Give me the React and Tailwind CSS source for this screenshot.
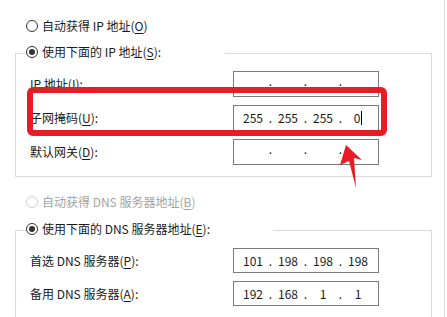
import React from 'react';

const Radio = ({ checked, disabled }) => (
    <span
        className={`flex h-[12px] w-[12px] shrink-0 items-center justify-center rounded-full border bg-white ${
            disabled ? 'border-[#cfcfcf]' : 'border-[#333333]'
        }`}
    >
        {checked && <span className="h-[6px] w-[6px] rounded-full bg-[#333333]" />}
    </span>
);

const Key = ({ k }) => (
    <>
        (<span className="underline underline-offset-2">{k}</span>)
    </>
);

const IpBox = ({ parts, cursor }) => {
    const empty = parts.every(p => p === '');
    return (
        <div className="flex h-full w-[146px] items-center border border-[#7a7a7a] bg-white pl-[4px] text-[12px] text-[#1a1a1a]">
            {parts.map((p, i) => (
                <React.Fragment key={i}>
                    {i > 0 && (
                        <span className={`relative w-[5px] text-center ${empty ? '-top-[3px]' : ''}`}>.</span>
                    )}
                    <span className="flex w-[30px] items-center justify-center">
                        {p}
                        {cursor && i === 3 && <span className="ml-[1px] h-[14px] w-px bg-black" />}
                    </span>
                </React.Fragment>
            ))}
        </div>
    );
};

const FieldRow = ({ label, k, parts, cursor, h }) => (
    <div className={`flex items-center ${h}`}>
        <span className="w-[203px] shrink-0">
            {label}
            <Key k={k} />:
        </span>
        <IpBox parts={parts} cursor={cursor} />
    </div>
);

export default function App() {
    return (
        <div
            className="relative h-[317px] w-[447px] overflow-hidden bg-white text-[12px] leading-none text-[#1a1a1a]"
            style={{ fontFamily: '"Noto Sans CJK SC", "Noto Sans", sans-serif' }}
        >
            <div className="h-full w-[445px] border-r border-[#d9d9d9] pt-[16px]">
                {/* IP 地址 */}
                <div className="ml-[26px] flex h-[20px] items-center gap-[4px]">
                    <Radio />
                    <span>
                        自动获得 IP 地址<Key k="O" />
                    </span>
                </div>

                <fieldset className="ml-[15px] mt-[6px] w-[417px] border border-[#dadada] pb-[11px] pl-[14px]">
                    <legend className="-ml-[4px] flex h-[22px] w-[199px] items-center gap-[4px] pb-[2px]">
                        <Radio checked />
                        <span>
                            使用下面的 IP 地址<Key k="S" />:
                        </span>
                    </legend>
                    <div className="flex flex-col gap-[8px] pt-[7px]">
                        <FieldRow label="IP 地址" k="I" parts={['', '', '', '']} h="h-[26px]" />
                        <FieldRow label="子网掩码" k="U" parts={['255', '255', '255', '0']} cursor h="h-[26px]" />
                        <FieldRow label="默认网关" k="D" parts={['', '', '', '']} h="h-[26px]" />
                    </div>
                </fieldset>

                {/* DNS */}
                <div className="ml-[26px] mt-[15px] flex h-[20px] items-center gap-[4px] text-[#a3a3a3]">
                    <Radio disabled />
                    <span>
                        自动获得 DNS 服务器地址<Key k="B" />
                    </span>
                </div>

                <fieldset className="ml-[15px] mt-[7px] w-[417px] border border-[#dadada] pb-[20px] pl-[14px]">
                    <legend className="-ml-[4px] flex h-[22px] w-[247px] items-center gap-[4px] pb-[2px]">
                        <Radio checked />
                        <span>
                            使用下面的 DNS 服务器地址<Key k="E" />:
                        </span>
                    </legend>
                    <div className="flex flex-col gap-[8px] pt-[7px]">
                        <FieldRow label="首选 DNS 服务器" k="P" parts={['101', '198', '198', '198']} h="h-[25px]" />
                        <FieldRow label="备用 DNS 服务器" k="A" parts={['192', '168', '1', '1']} h="h-[25px]" />
                    </div>
                </fieldset>
            </div>

            {/* 标注 */}
            <div className="absolute left-[27px] top-[87px] h-[49px] w-[360px] rounded-[6px] border-[6px] border-[#e81c24]" />
            <svg className="absolute left-0 top-0" width="447" height="317" viewBox="0 0 447 317">
                <polygon points="346,145 362,160 354,158 356,188 349,161 340,165" fill="#e81c24" />
            </svg>
        </div>
    );
}
